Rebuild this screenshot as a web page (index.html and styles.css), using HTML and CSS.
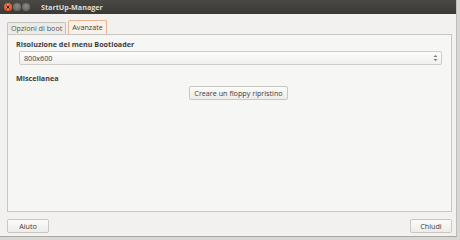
FILE: index.html
```html
<!DOCTYPE html>
<html>

<head>
  <title>StartUp-Manager</title>
  <meta name="viewport" content="width=device-width, initial-scale=1" />
  <link rel="stylesheet" href="styles.css">
</head>

<body>

  <div class="window">
    <div class="titlebar">
      <div class="controls">
        <span class="ctl ctl-close">
          <svg width="8" height="8" viewBox="0 0 8 8"><path d="M2.5 2.5 L5.5 5.5 M5.5 2.5 L2.5 5.5" stroke="#3a1a10" stroke-width="1"/></svg>
        </span>
        <span class="ctl"></span>
        <span class="ctl"></span>
      </div>
      <span class="title">StartUp-Manager</span>
    </div>

    <div class="content">
      <div class="notebook">
        <div class="tabs">
          <div class="tab">Opzioni di boot</div>
          <div class="tab active">Avanzate</div>
        </div>
        <div class="panel">
          <div class="heading">Risoluzione del menu Bootloader</div>
          <div class="combo">
            <span>800x600</span>
            <svg width="5" height="8" viewBox="0 0 5 8"><path d="M0.5 3 L2.5 1 L4.5 3 Z M0.5 5 L2.5 7 L4.5 5 Z" fill="#777"/></svg>
          </div>
          <div class="heading misc">Miscellanea</div>
          <div class="center">
            <button class="btn">Creare un floppy ripristino</button>
          </div>
        </div>
      </div>

      <div class="footer">
        <button class="btn wide">Aiuto</button>
        <button class="btn wide">Chiudi</button>
      </div>
    </div>
  </div>

</body>

</html>
```

FILE: styles.css
```css
html,
body {
  margin: 0;
  padding: 0;
  width: 460px;
  height: 240px;
  overflow: hidden;
  background-color: #d8d7d4;
}

.window {
  width: 457px;
  height: 237px;
  background-color: #f2f1f0;
  border-bottom: 1px solid #a8a7a3;
  border-right: 1px solid #bdbcb8;
  box-sizing: border-box;
  font-family: "Open Sans", "DejaVu Sans", sans-serif;
  font-size: 7.2px;
  color: #3c3c3c;
  display: flex;
  flex-direction: column;
}

.titlebar {
  height: 14px;
  background: linear-gradient(#4a4944, #3a3935);
  display: flex;
  align-items: center;
  padding-left: 4px;
  flex-shrink: 0;
}

.controls {
  display: flex;
  gap: 1px;
}

.ctl {
  width: 8px;
  height: 8px;
  border-radius: 50%;
  background: radial-gradient(circle at 50% 40%, #8a8984, #5c5b56);
  display: flex;
}

.ctl-close {
  background: radial-gradient(circle at 50% 40%, #f4845a, #d7481e);
}

.title {
  margin-left: 11px;
  color: #dfdbd2;
  font-weight: bold;
  font-size: 7.2px;
}

.content {
  flex: 1;
  display: flex;
  flex-direction: column;
  padding: 6px 4px 3px 7px;
}

.notebook {
  flex: 1;
  display: flex;
  flex-direction: column;
}

.tabs {
  display: flex;
  align-items: flex-end;
  gap: 2px;
  height: 14px;
}

.tab {
  height: 11px;
  line-height: 11px;
  padding: 0 3px;
  border: 1px solid #c4c2bd;
  border-bottom: none;
  border-radius: 2px 2px 0 0;
  background-color: #ebeae7;
  color: #5a5954;
}

.tab.active {
  height: 13px;
  line-height: 13px;
  border-color: #eeb48e;
  background-color: #faf1ea;
  color: #4a3d34;
}

.panel {
  flex: 1;
  border: 1px solid #c8c6c1;
  background-color: #f6f6f5;
  padding: 5px 8px 0 8px;
}

.heading {
  font-weight: bold;
  line-height: 9px;
}

.misc {
  margin-top: 9px;
}

.combo {
  margin: 2px 1px 0 3px;
  height: 12px;
  border: 1px solid #cfcdc8;
  border-radius: 2px;
  background: linear-gradient(#fcfcfb, #f1f0ee);
  display: flex;
  align-items: center;
  justify-content: space-between;
  padding: 0 3px 0 4px;
}

.center {
  display: flex;
  justify-content: center;
  margin-top: 3px;
  padding-left: 18px;
}

.btn {
  font-family: inherit;
  font-size: 7.2px;
  color: #3c3c3c;
  height: 14px;
  padding: 0 4px;
  border: 1px solid #c9c7c2;
  border-radius: 2px;
  background: linear-gradient(#fbfbfa, #edece9);
  line-height: 12px;
}

.footer {
  display: flex;
  justify-content: space-between;
  margin-top: 7px;
}

.btn.wide {
  width: 42px;
}
```
